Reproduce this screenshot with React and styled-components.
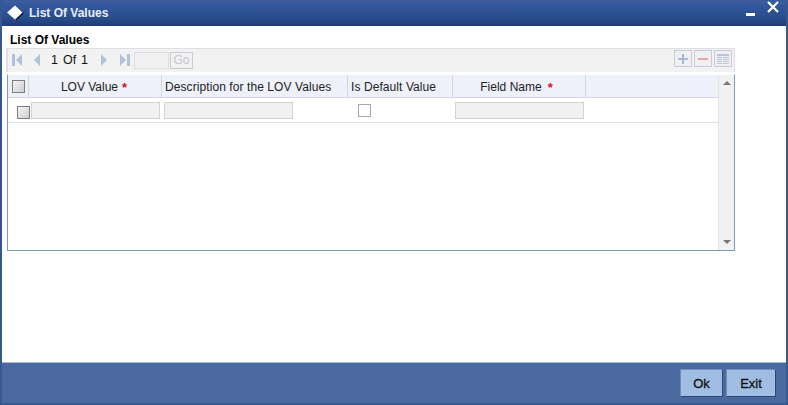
import React from 'react';
import styled, { createGlobalStyle } from 'styled-components';

const Global = createGlobalStyle`
  html, body { margin: 0; padding: 0; background: #fff; }
  body { font-family: "Liberation Sans", Arial, sans-serif; }
`;
const Win = styled.div`
  width: 788px; height: 405px; box-sizing: border-box; display: flex; flex-direction: column;
  border: 2px solid #35588f; border-top: 0; background: #fff; overflow: hidden;
`;
const TitleBar = styled.div`
  height: 26px; flex: none; margin: 0 -2px; padding: 0 7px 0 6px; display: flex; align-items: center; gap: 5px;
  box-sizing: border-box; color: #e8eef8; font-size: 12px; font-weight: bold;
  background: linear-gradient(#3a5c9c 0, #3a5c9c 3px, #33589f 4px, #2b4f8f 16px, #1f3d78 100%);
`;
const TitleIcon = styled.svg`flex: none; display: block;`;
const TitleText = styled.span`flex: 1;`;
const WinIcons = styled.div`display: flex; align-items: flex-start; gap: 12px; margin: -6px 2px 0 0;`;
const Body = styled.div`flex: 1; padding: 7px 0 0 4px; display: flex; flex-direction: column; min-height: 0;`;
const Heading = styled.div`font-size: 12px; font-weight: bold; color: #000; height: 15px; line-height: 14px; margin: 0 0 0 4px;`;
const Toolbar = styled.div`
  height: 24px; width: 729px; box-sizing: border-box; flex: none; display: flex; align-items: flex-start;
  background: #f2f2f3; border: 1px solid #dcdfe6; border-left-width: 2px; border-bottom: 0; padding: 1px 3px 0;
  color: #000; font-size: 12px;
`;
const Pager = styled.div`display: flex; align-items: center; flex: 1; height: 20px;`;
const Count = styled.span`margin: 0 12px 0 10px; word-spacing: 1.5px; white-space: pre; font-size: 12.5px; color: #111;`;
const PageBtn = styled.svg`display: block; flex: none; margin-right: ${p => p.$gap || 0}px;`;
const GoBox = styled.div`width: 33px; height: 15px; border: 1px solid #dedede; background: #f0f0f0; margin: 0 1px 0 3px;`;
const GoBtn = styled.div`
  width: 21px; height: 15px; border: 1px solid #c9ccd2; color: #c4c6cb; background: #f1f1f1; font-size: 12px;
  display: flex; align-items: center; justify-content: center;
`;
const Tools = styled.div`display: flex; gap: 2px; margin-right: -1px;`;
const ToolBtn = styled.div`
  width: 16px; height: 15px; border: 1px solid #c8ccd4; background: #f0f0f2; display: flex; align-items: center; justify-content: center;
`;
const TableBox = styled.div`
  margin: 2px 0 0 1px; width: 728px; height: 177px; box-sizing: border-box; flex: none; display: flex;
  border: 1px solid #789dbe; border-top: 1px solid transparent;
`;
const TableMain = styled.div`width: 710px; flex: none; display: flex; flex-direction: column;`;
const HeaderRow = styled.div`
  display: grid; grid-template-columns: 21px 133px 186px 105px 133px 1fr; height: 23px;
  background: #eef1fa; border-bottom: 1px solid #d2d6e4; box-sizing: border-box;
`;
const Th = styled.div`
  border-right: 1px solid #d2d6e4; display: flex; align-items: center;
  justify-content: ${p => (p.$left ? 'flex-start' : 'center')};
  padding: 1px ${p => p.$shift || 0}px 0 ${p => (p.$left ? 3 : 0)}px; gap: ${p => p.$gap || 4}px;
  font-size: 12px; color: #222; white-space: nowrap; box-sizing: border-box; letter-spacing: ${p => (p.$left ? 0.08 : 0)}px;
  &:last-child { border-right: 0; }
`;
const CheckCell = styled(Th)`padding: 0;`;
const Star = styled.span`color: #d0131b; font-size: 13px; font-weight: bold; line-height: 12px; margin-top: 3px;`;
const Row = styled.div`
  display: grid; grid-template-columns: 21px 133px 186px 105px 133px 1fr; height: 25px; box-sizing: border-box;
  border-bottom: 1px solid #dfe3ea;
`;
const Td = styled.div`display: flex; align-items: center; padding-left: ${p => p.$pl || 0}px; box-sizing: border-box;`;
const Check = styled.div`
  width: 13px; height: 13px; box-sizing: border-box; border: 1px solid #7e7e7e; flex: none;
  background: linear-gradient(135deg, #f4f4f4, #cfcfcf);
`;
const RowCheck = styled(Check)`margin: 4px 0 0 9px;`;
const PlainCheck = styled.div`width: 13px; height: 13px; box-sizing: border-box; border: 1px solid #a9a9a9; background: #fff;`;
const Field = styled.div`
  height: 17px; box-sizing: border-box; border: 1px solid #d3d3d3; background: #f1f1f1; width: ${p => p.$w}px; flex: none; margin-top: 1px;
`;
const Scroll = styled.div`
  width: 16px; flex: none; background: #f1f1f1; border-left: 1px solid #e4e4e4; display: flex; flex-direction: column;
  justify-content: space-between; align-items: center; padding: 6px 0 5px; box-sizing: border-box;
`;
const Footer = styled.div`
  height: 41px; flex: none; box-sizing: border-box; background: #4a699f; border-top: 1px solid #a7b8d6;
  display: flex; justify-content: flex-end; align-items: flex-start; gap: 3px; padding: 6px 10px 0 0;
`;
const FootBtn = styled.div`
  width: ${p => p.$w}px; height: 28px; box-sizing: border-box; background: #a0bde3;
  border: 1px solid #6f8dbb; border-right-color: #2d456f; border-bottom-color: #2d456f;
  display: flex; align-items: center; justify-content: center; color: #111; font-size: 13px; font-weight: normal;
  -webkit-text-stroke: 0.3px #111;
`;

const Tri = ({ d, w = 14, gap, fill = '#b2c1da' }) => (
  <PageBtn width={w} height="14" viewBox={`0 0 ${w} 14`} $gap={gap}><path d={d} fill={fill} /></PageBtn>
);

export default function App() {
  return (
    <Win>
      <Global />
      <TitleBar>
        <TitleIcon width="18" height="18" viewBox="0 0 18 18">
          <path d="M10 3 L18 9.5 L10 17 Z" fill="#0e2146" />
          <path d="M9 1.5 L16.5 8.5 L9 15.5 L1 8.5 Z" fill="#fff" />
        </TitleIcon>
        <TitleText>List Of Values</TitleText>
        <WinIcons>
          <svg width="9" height="18" viewBox="0 0 9 18"><rect y="12" width="9" height="3" fill="#fff" /></svg>
          <svg width="12" height="12" viewBox="0 0 12 12"><path d="M1 1 L11 11 M11 1 L1 11" stroke="#fff" strokeWidth="2.2" /></svg>
        </WinIcons>
      </TitleBar>
      <Body>
        <Heading>List Of Values</Heading>
        <Toolbar>
          <Pager>
            <Tri w={13} gap={9} d="M1 1h3v12H1z M11 1v12L5 7z" />
            <Tri w={8} d="M7 1v12L1 7z" />
            <Count>1 Of 1</Count>
            <Tri w={8} gap={11} d="M1 1v12l6-6z" />
            <Tri w={12} d="M1 1v12l6-6z M8 1h3v12H8z" />
            <GoBox />
            <GoBtn>Go</GoBtn>
          </Pager>
          <Tools>
            <ToolBtn><svg width="12" height="12" viewBox="0 0 12 12"><path d="M5 1h2v4h4v2H7v4H5V7H1V5h4z" fill="#a9b9d5" /></svg></ToolBtn>
            <ToolBtn><svg width="12" height="12" viewBox="0 0 12 12"><rect x="1" y="5" width="10" height="2" fill="#e3a8aa" /></svg></ToolBtn>
            <ToolBtn><svg width="14" height="12" viewBox="0 0 14 12"><path d="M1 1h12v2H1z M1 4h5v1H1z M7 4h6v1H7z M1 6h5v1H1z M7 6h6v1H7z M1 8h5v1H1z M7 8h6v1H7z M1 10h5v1H1z M7 10h6v1H7z" fill="#b9c5da" /></svg></ToolBtn>
          </Tools>
        </Toolbar>
        <TableBox>
          <TableMain>
            <HeaderRow>
              <CheckCell><Check /></CheckCell>
              <Th $shift={2}>LOV Value <Star>*</Star></Th>
              <Th $left>Description for the LOV Values</Th>
              <Th $left>Is Default Value</Th>
              <Th $shift={5} $gap={6}>Field Name <Star>*</Star></Th>
              <Th />
            </HeaderRow>
            <Row>
              <Td><RowCheck /></Td>
              <Td $pl={2}><Field $w={129} /></Td>
              <Td $pl={2}><Field $w={129} /></Td>
              <Td $pl={10}><PlainCheck /></Td>
              <Td $pl={2}><Field $w={129} /></Td>
              <Td />
            </Row>
          </TableMain>
          <Scroll>
            <svg width="8" height="5" viewBox="0 0 8 5"><path d="M4 0 L8 4 H0 Z" fill="#777" /></svg>
            <svg width="8" height="5" viewBox="0 0 8 5"><path d="M0 0 H8 L4 4 Z" fill="#777" /></svg>
          </Scroll>
        </TableBox>
      </Body>
      <Footer>
        <FootBtn $w={43}>Ok</FootBtn>
        <FootBtn $w={50}>Exit</FootBtn>
      </Footer>
    </Win>
  );
}
